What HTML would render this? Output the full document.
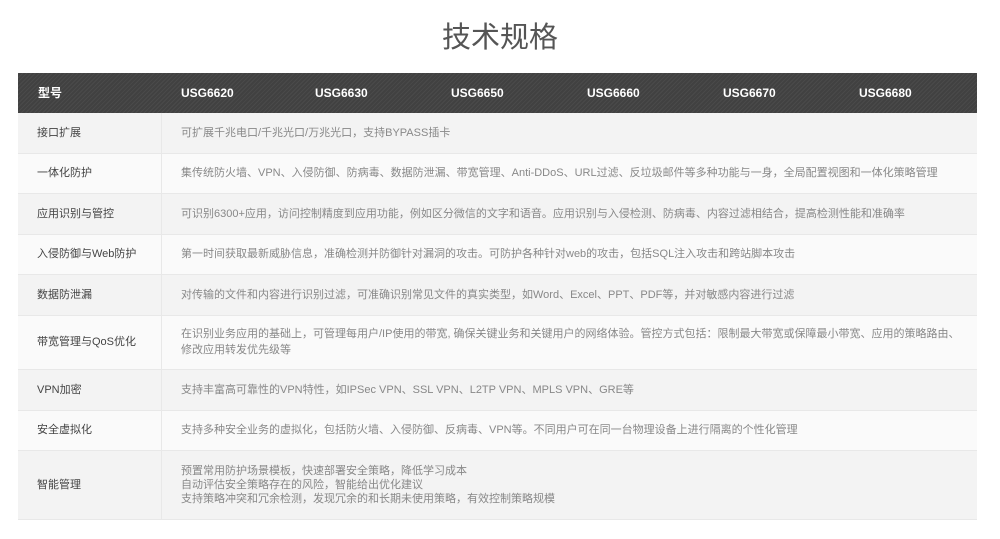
<!DOCTYPE html><html><head><meta charset="utf-8"><style>
body{margin:0;background:#fff;width:1000px;height:539px;overflow:hidden;font-family:"Liberation Sans","Noto Sans CJK SC",sans-serif}
h1{position:absolute;top:18px;left:0;width:1000px;text-align:center;margin:0;font-weight:normal;font-size:29px;color:#555;line-height:40px}
.hd{position:absolute;left:18px;top:73px;width:959px;height:40px;background:#444 repeating-linear-gradient(135deg,#4a4a4a 0 1px,#414141 1px 3px);color:#fff;font-size:12px;font-weight:bold}
.hd span{position:absolute;top:0;line-height:40px}
table{position:absolute;left:18px;top:113px;width:959px;border-collapse:collapse;font-size:11px}
td{border-bottom:1px solid #e8e8e8;padding:0;vertical-align:middle;line-height:16px}
td.a{width:124px;padding-left:19px;color:#444;border-right:1px solid #e8e8e8}
td.b{padding-left:19px;color:#888}
tr:nth-child(odd){background:#f3f3f3}tr:nth-child(even){background:#fafafa}
</style></head><body>
<h1>技术规格</h1>
<div class="hd"><span style="left:20px">型号</span><span style="left:163px">USG6620</span><span style="left:297px">USG6630</span><span style="left:433px">USG6650</span><span style="left:569px">USG6660</span><span style="left:705px">USG6670</span><span style="left:841px">USG6680</span></div>
<table>
<tr style="height:40px"><td class="a">接口扩展</td><td class="b">可扩展千兆电口/千兆光口/万兆光口，支持BYPASS插卡</td></tr>
<tr style="height:40px"><td class="a">一体化防护</td><td class="b">集传统防火墙、VPN、入侵防御、防病毒、数据防泄漏、带宽管理、Anti-DDoS、URL过滤、反垃圾邮件等多种功能与一身，全局配置视图和一体化策略管理</td></tr>
<tr style="height:41px"><td class="a">应用识别与管控</td><td class="b">可识别6300+应用，访问控制精度到应用功能，例如区分微信的文字和语音。应用识别与入侵检测、防病毒、内容过滤相结合，提高检测性能和准确率</td></tr>
<tr style="height:40px"><td class="a">入侵防御与Web防护</td><td class="b">第一时间获取最新威胁信息，准确检测并防御针对漏洞的攻击。可防护各种针对web的攻击，包括SQL注入攻击和跨站脚本攻击</td></tr>
<tr style="height:41px"><td class="a">数据防泄漏</td><td class="b">对传输的文件和内容进行识别过滤，可准确识别常见文件的真实类型，如Word、Excel、PPT、PDF等，并对敏感内容进行过滤</td></tr>
<tr style="height:54px"><td class="a">带宽管理与QoS优化</td><td class="b">在识别业务应用的基础上，可管理每用户/IP使用的带宽, 确保关键业务和关键用户的网络体验。管控方式包括：限制最大带宽或保障最小带宽、应用的策略路由、<br>修改应用转发优先级等</td></tr>
<tr style="height:41px"><td class="a">VPN加密</td><td class="b">支持丰富高可靠性的VPN特性，如IPSec VPN、SSL VPN、L2TP VPN、MPLS VPN、GRE等</td></tr>
<tr style="height:40px"><td class="a">安全虚拟化</td><td class="b">支持多种安全业务的虚拟化，包括防火墙、入侵防御、反病毒、VPN等。不同用户可在同一台物理设备上进行隔离的个性化管理</td></tr>
<tr style="height:69px"><td class="a">智能管理</td><td class="b" style="line-height:14px">预置常用防护场景模板，快速部署安全策略，降低学习成本<br>自动评估安全策略存在的风险，智能给出优化建议<br>支持策略冲突和冗余检测，发现冗余的和长期未使用策略，有效控制策略规模</td></tr>
</table>
</body></html>
